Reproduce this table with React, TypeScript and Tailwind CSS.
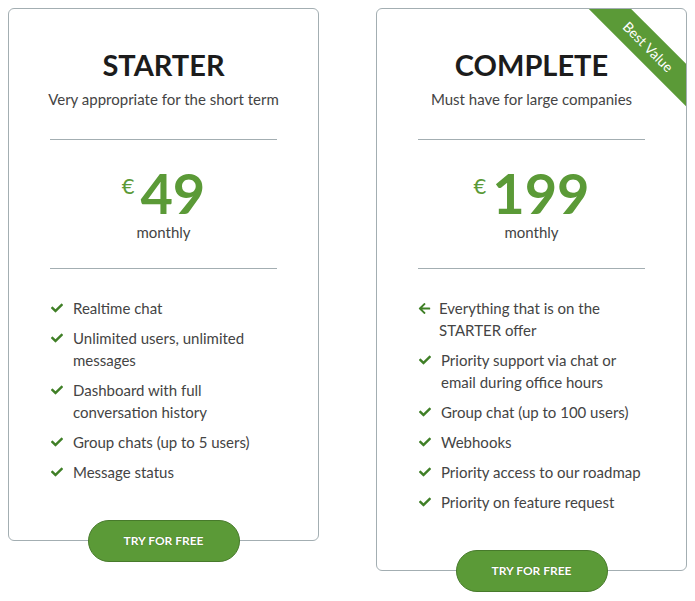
import React from "react";
import { FaCheck, FaArrowLeft } from "react-icons/fa";

interface IFeature {
  text: string;
  icon?: "check" | "back";
}

interface IPlanProps {
  name: string;
  tagline: string;
  price: string;
  features: IFeature[];
  ribbon?: string;
}

const plans: IPlanProps[] = [
  {
    name: "STARTER",
    tagline: "Very appropriate for the short term",
    price: "49",
    features: [
      { text: "Realtime chat" },
      { text: "Unlimited users, unlimited messages" },
      { text: "Dashboard with full conversation history" },
      { text: "Group chats (up to 5 users)" },
      { text: "Message status" },
    ],
  },
  {
    name: "COMPLETE",
    tagline: "Must have for large companies",
    price: "199",
    ribbon: "Best Value",
    features: [
      { text: "Everything that is on the STARTER offer", icon: "back" },
      { text: "Priority support via chat or email during office hours" },
      { text: "Group chat (up to 100 users)" },
      { text: "Webhooks" },
      { text: "Priority access to our roadmap" },
      { text: "Priority on feature request" },
    ],
  },
];

const Plan: React.FC<IPlanProps> = ({ name, tagline, price, features, ribbon }) => {
  return (
    <div className="relative w-[311px] flex flex-col items-center border border-[#a3aeb2] rounded-md bg-white pt-[41px]">
      {ribbon && (
        <div className="absolute top-0 right-0 w-[100px] h-[100px] overflow-hidden rounded-tr-md">
          <div className="absolute left-[-13px] top-[23px] w-[150px] h-[30px] rotate-45 bg-[#5b9a37] flex items-center justify-center text-white text-[14px] leading-none">
            {ribbon}
          </div>
        </div>
      )}
      <h2 className="text-[29px] leading-none font-bold text-[#1c1c1c]">{name}</h2>
      <p className="mt-[9px] text-[15px] leading-[22px] text-[#444]">{tagline}</p>
      <div className="mt-[29px] w-[227px] h-px bg-[#a3aeb2]"></div>
      <div className="mt-[30px] flex items-start text-[#5b9a37]">
        <span className="mt-[5px] mr-[6px] text-[22px] leading-none">€</span>
        <span className="text-[56px] leading-[46px] font-bold">{price}</span>
      </div>
      <p className="mt-[5px] text-[15px] leading-[22px] text-[#444]">monthly</p>
      <div className="mt-[25px] w-[227px] h-px bg-[#a3aeb2]"></div>
      <ul className="mt-[28px] self-stretch pl-[41px] pr-[40px] flex flex-col gap-2">
        {features.map((feature, key) => (
          <li key={key} className="flex items-start text-[15px] leading-[22px] text-[#444]">
            {feature.icon === "back" ? (
              <FaArrowLeft className="mt-[5px] w-[13px] h-[13px] text-[#3f7f26] shrink-0 mr-[8px]" />
            ) : (
              <FaCheck className="mt-[5px] w-[14px] h-[12px] text-[#3f7f26] shrink-0 mr-[9px]" />
            )}
            <span>{feature.text}</span>
          </li>
        ))}
      </ul>
      <a
        href="#signup"
        className="mt-[37px] -mb-[22px] w-[152px] h-[42px] flex items-center justify-center rounded-full bg-[#5b9a37] border border-[#477a2b] text-white text-[12px] font-bold [text-shadow:0_0_1px_rgba(0,0,0,0.4)]"
      >
        TRY FOR FREE
      </a>
    </div>
  );
};

export default function App() {
  return (
    <div className="w-[695px] h-[601px] bg-white pl-2 pt-2 flex items-start gap-[57px] font-['Lato',sans-serif]">
      {plans.map((plan) => (
        <Plan key={plan.name} {...plan} />
      ))}
    </div>
  );
}
